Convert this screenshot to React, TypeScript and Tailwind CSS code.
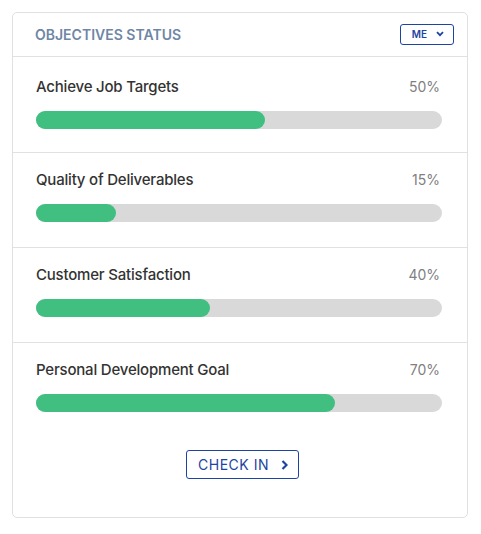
import React from "react";

const items = [
  { name: "Achieve Job Targets", pct: "50%", fill: 229 },
  { name: "Quality of Deliverables", pct: "15%", fill: 80 },
  { name: "Customer Satisfaction", pct: "40%", fill: 174 },
  { name: "Personal Development Goal", pct: "70%", fill: 299 },
];

const rowCls = [
  "border-b border-[#e1e1e1] pl-[23px] pr-[24px] pt-[20px] pb-[23px]",
  "border-b border-[#e1e1e1] pl-[23px] pr-[24px] pt-[17px] pb-[25px]",
  "border-b border-[#e1e1e1] pl-[23px] pr-[24px] pt-[17px] pb-[25px]",
  "pl-[23px] pr-[24px] pt-[17px]",
];

export default function App() {
  return (
    <div className="min-h-[534px] w-[481px] bg-white p-3 font-['Inter',sans-serif]">
      <div className="flex h-[506px] w-[456px] flex-col rounded-[5px] border border-[#e1e1e1] bg-white">
        <div className="flex h-[44px] items-center justify-between border-b border-[#e1e1e1] pl-[22px] pr-[13px]">
          <span className="text-[14px] font-semibold uppercase tracking-[0px] text-[#6f86a6]">
            Objectives Status
          </span>
          <button className="-mt-[1px] flex h-[21px] w-[54px] items-center justify-center gap-[9px] rounded-[3px] border border-[#1e44a2] pl-[2px] text-[10px] font-semibold text-[#1e44a2]">
            ME
            <svg width="8" height="6" viewBox="0 0 8 6" fill="none">
              <path d="M1 1.2 L4 4.2 L7 1.2" stroke="#1e44a2" strokeWidth="1.8" />
            </svg>
          </button>
        </div>
        {items.map((it, i) => (
          <div key={it.name} className={rowCls[i]}>
            <div className="flex h-[20px] items-center justify-between">
              <span className="text-[15px] font-medium tracking-[-0.2px] text-[#333]">{it.name}</span>
              <span className="-mt-[1px] pr-[3px] text-[14px] text-[#808080]">{it.pct}</span>
            </div>
            <div className="mt-[14px] h-[18px] w-[406px] rounded-full bg-[#d9d9d9]">
              <div className="h-full rounded-full bg-[#41bf80]" style={{ width: it.fill }} />
            </div>
          </div>
        ))}
        <div className="flex justify-center pt-[38px] pl-[5px]">
          <button className="flex h-[29px] w-[113px] items-center justify-center gap-[12px] rounded-[3px] border border-[#1e44a2] pl-[1px] text-[14px] font-normal tracking-[0.5px] text-[#1e44a2]">
            CHECK IN
            <svg width="7" height="10" viewBox="0 0 7 10" fill="none">
              <path d="M1.5 1 L5.5 5 L1.5 9" stroke="#1e44a2" strokeWidth="2.2" />
            </svg>
          </button>
        </div>
      </div>
    </div>
  );
}
